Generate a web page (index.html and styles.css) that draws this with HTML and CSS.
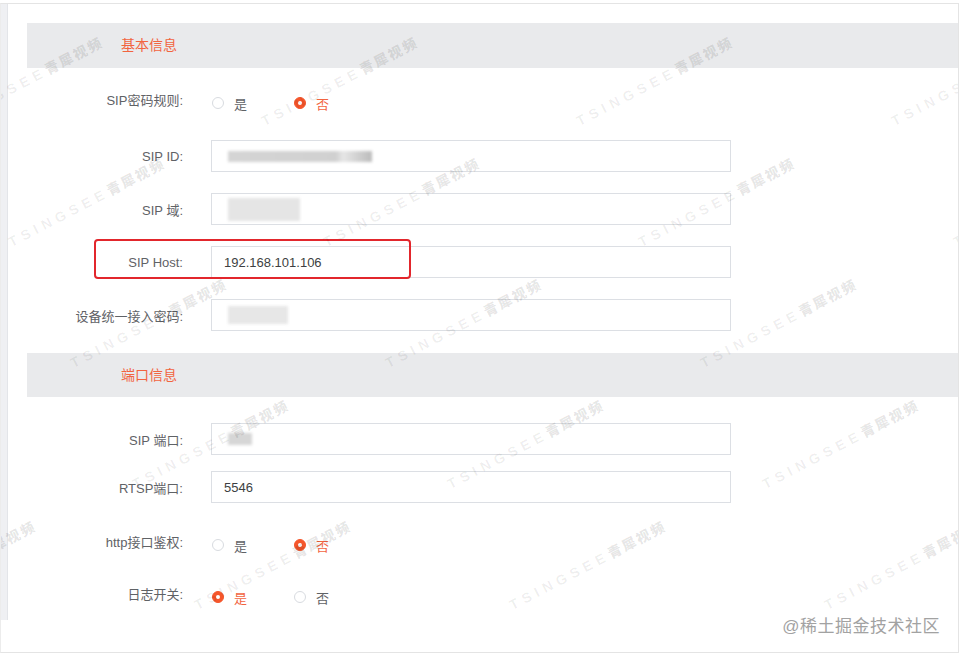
FILE: index.html
```html
<!DOCTYPE html>
<html lang="zh-CN">

<head>
    <meta charset="UTF-8">
    <meta name="viewport" content="width=device-width, initial-scale=1.0">
    <title>SIP 配置</title>
    <link rel="stylesheet" href="styles.css">
</head>

<body>
    <div class="frame">
        <div class="page">
            <div class="rail"></div>
            <div class="panel">
                <div class="section-title">基本信息</div>

                <div class="row row-radio first-radio">
                    <label class="label">SIP密码规则:</label>
                    <div class="radios">
                        <span class="radio"><span class="dot"></span>是</span>
                        <span class="radio checked"><span class="dot"></span>否</span>
                    </div>
                </div>

                <div class="row">
                    <label class="label">SIP ID:</label>
                    <div class="input"><span class="mask mask-id"></span></div>
                </div>

                <div class="row">
                    <label class="label">SIP 域:</label>
                    <div class="input"><span class="mask mask-domain"></span></div>
                </div>

                <div class="row">
                    <label class="label">SIP Host:</label>
                    <div class="input">192.168.101.106</div>
                    <div class="highlight"></div>
                </div>

                <div class="row">
                    <label class="label">设备统一接入密码:</label>
                    <div class="input"><span class="mask mask-pass"></span></div>
                </div>

                <div class="section-title second">端口信息</div>

                <div class="row first-port">
                    <label class="label">SIP 端口:</label>
                    <div class="input"><span class="mask mask-port"></span></div>
                </div>

                <div class="row tight">
                    <label class="label">RTSP端口:</label>
                    <div class="input">5546</div>
                </div>

                <div class="row row-radio http-row">
                    <label class="label">http接口鉴权:</label>
                    <div class="radios">
                        <span class="radio"><span class="dot"></span>是</span>
                        <span class="radio checked"><span class="dot"></span>否</span>
                    </div>
                </div>

                <div class="row row-radio log-row">
                    <label class="label">日志开关:</label>
                    <div class="radios">
                        <span class="radio checked"><span class="dot"></span>是</span>
                        <span class="radio"><span class="dot"></span>否</span>
                    </div>
                </div>
            </div>
        </div>

        <div class="watermarks" id="wm"></div>
        <div class="credit">@稀土掘金技术社区</div>
    </div>

    <script>
        // tile the TSINGSEE watermark over the whole shot
        let wm = document.getElementById('wm');
        let baseX = 580;
        let baseY = 125;

        for (let r = -2; r <= 6; r++) {
            for (let c = -3; c <= 3; c++) {
                let x = baseX + c * 315 + r * 62;
                let y = baseY + r * 121;
                if (x < -220 || x > 980 || y < -20 || y > 720) continue;
                let mark = document.createElement('span');
                mark.className = 'mark';
                mark.innerHTML = 'TSINGSEE<b>青犀视频</b>';
                mark.style.left = x + 'px';
                mark.style.top = (y - 16) + 'px';
                wm.appendChild(mark);
            }
        }
    </script>
</body>

</html>
```

FILE: styles.css
```css
* {
    box-sizing: border-box;
}

body {
    margin: 0;
    background: #fff;
    font-family: "Liberation Sans", "Noto Sans CJK SC", sans-serif;
    color: #5f6266;
}

.frame {
    position: relative;
    width: 959px;
    height: 650px;
    margin-top: 3px;
    border: 1px solid #e4e4e4;
    border-left-color: #ececec;
    overflow: hidden;
}

.page {
    display: flex;
}

.rail {
    width: 7px;
    height: 616px;
    background: #eff0f3;
    border-right: 1px solid #e3e5e9;
}

.panel {
    flex: 1;
    padding-left: 19px;
    padding-top: 19px;
}

.section-title {
    height: 45px;
    line-height: 45px;
    padding-left: 94px;
    background: #e9eaec;
    color: #f2643f;
    font-size: 14px;
}

.section-title.second {
    margin-top: 22px;
    height: 44px;
    line-height: 44px;
}

.row {
    position: relative;
    display: grid;
    grid-template-columns: 156px 520px;
    column-gap: 28px;
    align-items: center;
    height: 32px;
    margin-top: 21px;
}

.row.first-radio {
    margin-top: 19px;
}

.row.first-port {
    margin-top: 26px;
}

.row.tight {
    margin-top: 16px;
}

.row.http-row {
    margin-top: 26px;
}

.row.log-row {
    margin-top: 20px;
}

.label {
    text-align: right;
    font-size: 13px;
    color: #5f6266;
}

.row-radio .label {
    position: relative;
    top: -4px;
}

.input {
    display: flex;
    align-items: center;
    height: 32px;
    padding-left: 12px;
    border: 1px solid #dcdfe4;
    font-size: 13px;
    color: #3d3f42;
    background: #fff;
}

.mask {
    display: block;
    margin-left: 4px;
    filter: blur(1.5px);
}

.mask-id {
    width: 144px;
    height: 11px;
    background: linear-gradient(90deg, #d4d4d4 0%, #d0d0d0 75%, #e6e6e6 80%, #bbb 100%);
}

.mask-domain {
    width: 72px;
    height: 23px;
    background: #e5e5e5;
}

.mask-pass {
    width: 60px;
    height: 18px;
    background: #e7e7e7;
}

.mask-port {
    width: 24px;
    height: 12px;
    background: #d6d6d6;
}

.radios {
    display: flex;
    align-items: center;
    padding-left: 1px;
    font-size: 13px;
}

.radio {
    display: inline-flex;
    align-items: center;
    color: #5f6266;
}

.radio + .radio {
    margin-left: 47px;
}

.dot {
    position: relative;
    width: 12px;
    height: 12px;
    margin-right: 10px;
    border: 1px solid #d8dbe0;
    border-radius: 50%;
    background: #fff;
}

.radio.checked {
    color: #f2643f;
}

.radio.checked .dot {
    border-color: #f5562b;
    background: #f5562b;
}

.radio.checked .dot::after {
    content: "";
    position: absolute;
    left: 3px;
    top: 3px;
    width: 4px;
    height: 4px;
    border-radius: 50%;
    background: #fff;
}

.highlight {
    position: absolute;
    left: 67px;
    top: -7px;
    width: 317px;
    height: 40px;
    border: 2px solid #e2262c;
    border-radius: 4px;
}

.watermarks {
    position: absolute;
    inset: 0;
    pointer-events: none;
}

.mark {
    position: absolute;
    font-size: 14px;
    font-weight: 700;
    line-height: 16px;
    letter-spacing: 5px;
    color: rgba(0, 0, 0, 0.07);
    white-space: nowrap;
    transform: rotate(-27.5deg);
    transform-origin: 0 100%;
}

.mark b {
    letter-spacing: 2px;
    color: rgba(0, 0, 0, 0.1);
}

.credit {
    position: absolute;
    right: 18px;
    bottom: 15px;
    font-size: 17px;
    color: #a2a2a2;
    letter-spacing: 0.5px;
}
```
